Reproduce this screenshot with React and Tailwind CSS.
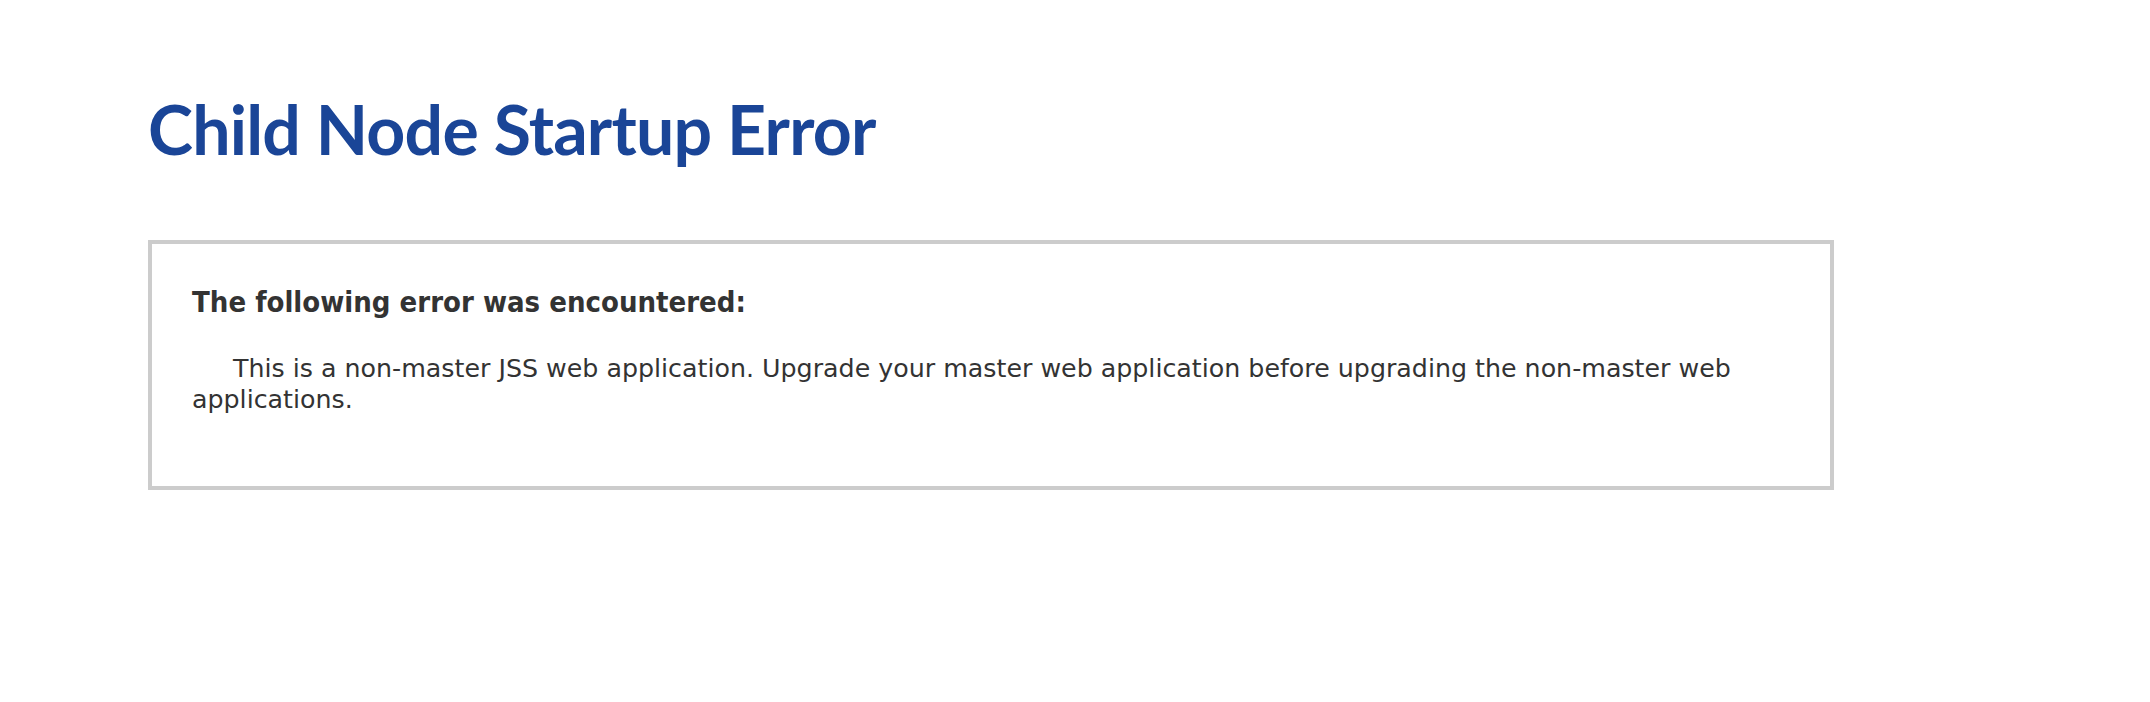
export default function App() {
  return (
    <div className="min-h-screen bg-white pl-[148px] pt-[88px]">
      <h1 className="font-['Lato',sans-serif] text-[68px] font-bold leading-[82px] tracking-[-0.8px] text-[#1a4597]">
        Child Node Startup Error
      </h1>

      <div className="mt-[70px] w-[1686px] h-[250px] border-[4px] border-[#cccccc] px-[40px] pt-[40px] text-[#333333]">
        <h3 className="font-['DejaVu_Sans_Condensed','DejaVu_Sans',sans-serif] text-[29px] font-bold leading-[36px]">
          The following error was encountered:
        </h3>
        <p className="mt-[33px] font-['DejaVu_Sans',sans-serif] text-[25.3px] leading-[31px] indent-[41px]">
          This is a non-master JSS web application. Upgrade your master web application before upgrading the non-master web applications.
        </p>
      </div>
    </div>
  );
}
